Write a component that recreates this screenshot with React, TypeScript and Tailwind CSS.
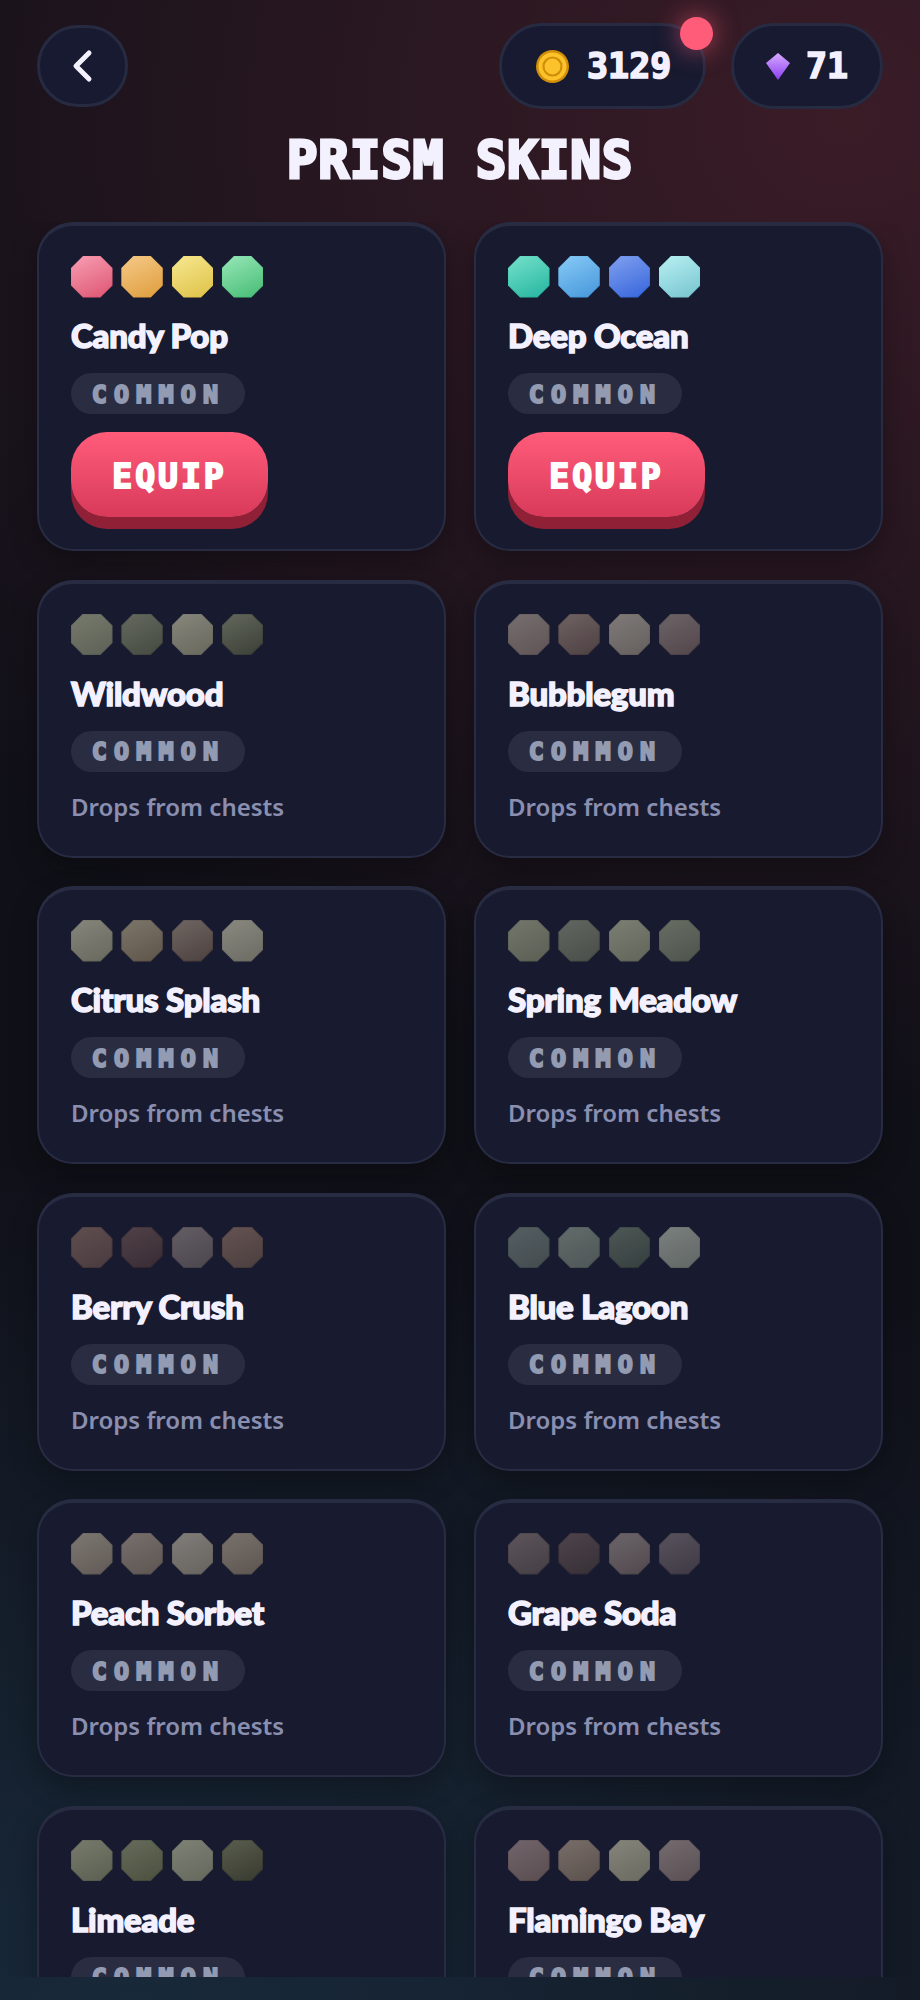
import { JSX } from 'react'

type Skin = {
  name: string
  swatches: string[]
  owned?: boolean
}

const skins: Skin[] = [
  {
    name: 'Candy Pop',
    owned: true,
    swatches: [
      'bg-[linear-gradient(155deg,#f79ab0,#dc4a68)]',
      'bg-[linear-gradient(155deg,#f5c783,#dd9730)]',
      'bg-[linear-gradient(155deg,#f6e78b,#dcbd3c)]',
      'bg-[linear-gradient(155deg,#92e6b5,#3bb86b)]'
    ]
  },
  {
    name: 'Deep Ocean',
    owned: true,
    swatches: [
      'bg-[linear-gradient(155deg,#6fe0c8,#18b09a)]',
      'bg-[linear-gradient(155deg,#82c8f7,#3a90d8)]',
      'bg-[linear-gradient(155deg,#7a9cf0,#2a5cd8)]',
      'bg-[linear-gradient(155deg,#b5f0f2,#6ec0cc)]'
    ]
  },
  {
    name: 'Wildwood',
    swatches: [
      'bg-[linear-gradient(155deg,#6f7365,#55584c)]',
      'bg-[linear-gradient(155deg,#5c6256,#3b4037)]',
      'bg-[linear-gradient(155deg,#808075,#5f5f54)]',
      'bg-[linear-gradient(155deg,#5b6054,#30352c)]'
    ]
  },
  {
    name: 'Bubblegum',
    swatches: [
      'bg-[linear-gradient(155deg,#6e6767,#574a4c)]',
      'bg-[linear-gradient(155deg,#685a5a,#443638)]',
      'bg-[linear-gradient(155deg,#797472,#5c5654)]',
      'bg-[linear-gradient(155deg,#655c60,#493c40)]'
    ]
  },
  {
    name: 'Citrus Splash',
    swatches: [
      'bg-[linear-gradient(155deg,#807f75,#5f5f54)]',
      'bg-[linear-gradient(155deg,#756e62,#564b40)]',
      'bg-[linear-gradient(155deg,#685e5a,#423634)]',
      'bg-[linear-gradient(155deg,#82827a,#64645a)]'
    ]
  },
  {
    name: 'Spring Meadow',
    swatches: [
      'bg-[linear-gradient(155deg,#6a6f64,#52564a)]',
      'bg-[linear-gradient(155deg,#595f58,#3f443e)]',
      'bg-[linear-gradient(155deg,#75796c,#585c50)]',
      'bg-[linear-gradient(155deg,#60665c,#444a42)]'
    ]
  },
  {
    name: 'Berry Crush',
    swatches: [
      'bg-[linear-gradient(155deg,#574446,#403134)]',
      'bg-[linear-gradient(155deg,#48383e,#2d202a)]',
      'bg-[linear-gradient(155deg,#5b545c,#423c44)]',
      'bg-[linear-gradient(155deg,#5d4a49,#413434)]'
    ]
  },
  {
    name: 'Blue Lagoon',
    swatches: [
      'bg-[linear-gradient(155deg,#4c5659,#394246)]',
      'bg-[linear-gradient(155deg,#5b6464,#444c4c)]',
      'bg-[linear-gradient(155deg,#444f4d,#2a3434)]',
      'bg-[linear-gradient(155deg,#747a78,#585e5c)]'
    ]
  },
  {
    name: 'Peach Sorbet',
    swatches: [
      'bg-[linear-gradient(155deg,#76706a,#58514d)]',
      'bg-[linear-gradient(155deg,#706864,#544c48)]',
      'bg-[linear-gradient(155deg,#7a7672,#5e5a56)]',
      'bg-[linear-gradient(155deg,#726a64,#544c46)]'
    ]
  },
  {
    name: 'Grape Soda',
    swatches: [
      'bg-[linear-gradient(155deg,#544c52,#3a343a)]',
      'bg-[linear-gradient(155deg,#453a42,#2c242c)]',
      'bg-[linear-gradient(155deg,#645c62,#473f43)]',
      'bg-[linear-gradient(155deg,#4f4a54,#342e3a)]'
    ]
  },
  {
    name: 'Limeade',
    swatches: [
      'bg-[linear-gradient(155deg,#707464,#525648)]',
      'bg-[linear-gradient(155deg,#5e6452,#414634)]',
      'bg-[linear-gradient(155deg,#787c6e,#5c6054)]',
      'bg-[linear-gradient(155deg,#515544,#2d2f24)]'
    ]
  },
  {
    name: 'Flamingo Bay',
    swatches: [
      'bg-[linear-gradient(155deg,#6a5c64,#514446)]',
      'bg-[linear-gradient(155deg,#706662,#534742)]',
      'bg-[linear-gradient(155deg,#7e7e74,#636258)]',
      'bg-[linear-gradient(155deg,#6d6468,#51464a)]'
    ]
  }
]

const octagon =
  '[clip-path:polygon(29%_0,71%_0,100%_29%,100%_71%,71%_100%,29%_100%,0_71%,0_29%)]'

function SkinCard({ skin }: { skin: Skin }): JSX.Element {
  return (
    <div className="flex flex-col items-start rounded-[36px] border-2 border-t-[4px] border-[#282c43] bg-[#181b30] px-8 pb-8 pt-[30px] shadow-[0_10px_28px_rgba(0,0,0,0.3)]">
      <div className="flex h-[42px] gap-[8.8px]">
        {skin.swatches.map((swatch) => (
          <div key={swatch} className={`size-[41.5px] p-px ${octagon} ${swatch}`}>
            <div className={`size-full bg-white/5 ${octagon}`} />
          </div>
        ))}
      </div>
      <h3 className="mt-[15px] mb-[15px] h-[45px] font-['Lato'] text-[33px] leading-[45px] font-black tracking-[-0.2px] whitespace-nowrap text-[#f4f1ff] [-webkit-text-stroke:1.5px_#f4f1ff]">
        {skin.name}
      </h3>
      <span className="flex h-[41px] w-[174px] items-center justify-center rounded-full bg-[#2a2d42] pl-[1px] pt-[2px] font-['DejaVu_Sans_Mono'] text-[25px] font-bold tracking-[7.2px] text-[#939bb2] [-webkit-text-stroke:2px_#939bb2]">
        COMMON
      </span>
      {skin.owned ? (
        <button
          type="button"
          className="mt-[18px] h-[85px] w-[197px] rounded-[36px] bg-[linear-gradient(180deg,#ff5c7a,#d93a5a)] pt-[4px] font-['DejaVu_Sans_Mono'] text-[33px] font-bold tracking-[3px] text-white shadow-[0_12px_0_#8f2036] [-webkit-text-stroke:2px_#ffffff]"
        >
          EQUIP
        </button>
      ) : (
        <p className="mt-[17px] h-[35px] font-['Noto_Sans'] text-[24px] leading-[35px] font-semibold text-[#8a8fb0]">
          Drops from chests
        </p>
      )}
    </div>
  )
}

export default function App(): JSX.Element {
  return (
    <div className="flex h-[2000px] w-[920px] flex-col overflow-hidden bg-[radial-gradient(ellipse_1150px_1000px_at_92%_6%,#3a1c27,transparent),radial-gradient(ellipse_1400px_850px_at_15%_100%,#18293a,transparent),linear-gradient(#101018,#101018)] pb-[23px]">
      <header className="flex items-center justify-between px-[37px] pt-[23px]">
        <button
          type="button"
          className="flex h-[82px] w-[91px] items-center justify-center rounded-full border-[3px] border-[#262b42] bg-[#171a30]"
        >
          <svg width="24" height="36" viewBox="0 0 24 36" fill="none">
            <path
              d="M18 5 5 18l13 13"
              stroke="#f4f1ff"
              strokeWidth="5"
              strokeLinecap="round"
              strokeLinejoin="round"
            />
          </svg>
        </button>
        <div className="flex gap-[25px]">
          <div className="relative flex h-[86px] w-[207px] items-center gap-[18px] rounded-full border-[3px] border-[#262b42] bg-[#171a30] pl-[34px]">
            <svg width="33" height="33" viewBox="0 0 33 33" className="shrink-0">
              <circle cx="16.5" cy="16.5" r="16.5" fill="#d08f08" />
              <circle cx="16.5" cy="16.5" r="14" fill="#fcc22c" />
              <circle cx="16.5" cy="16.5" r="9" fill="#fcc22c" stroke="#d08f08" strokeWidth="2.2" />
            </svg>
            <span className="pt-[1px] font-['DejaVu_Sans_Mono'] text-[35px] font-bold text-[#f4f1ff] [-webkit-text-stroke:1.6px_#f4f1ff]">
              3129
            </span>
            <span className="absolute -right-[10px] -top-[9.5px] size-[33px] rounded-full bg-[#ff5c7a] shadow-[0_0_26px_rgba(255,92,122,0.65)]" />
          </div>
          <div className="flex h-[86px] w-[152px] items-center gap-[16px] rounded-full border-[3px] border-[#262b42] bg-[#171a30] pl-[32px]">
            <svg width="24" height="27" viewBox="0 0 24 27" className="shrink-0">
              <defs>
                <linearGradient id="gem" x1="0" y1="0" x2="0" y2="1">
                  <stop offset="0" stopColor="#d8aaff" />
                  <stop offset="1" stopColor="#8a3ff0" />
                </linearGradient>
              </defs>
              <path d="M12 0 24 10 12 27 0 10Z" fill="url(#gem)" />
            </svg>
            <span className="pt-[1px] font-['DejaVu_Sans_Mono'] text-[35px] font-bold text-[#f4f1ff] [-webkit-text-stroke:1.6px_#f4f1ff]">
              71
            </span>
          </div>
        </div>
      </header>
      <h1 className="mt-[22px] mb-[31px] h-[60px] text-center font-['DejaVu_Sans_Mono'] text-[51px] leading-[60px] font-bold tracking-[0.8px] text-[#f4f1ff] [-webkit-text-stroke:3px_#f4f1ff]">
        PRISM SKINS
      </h1>
      <main className="min-h-0 flex-1 overflow-hidden px-[37px]">
        <div className="grid grid-cols-2 gap-x-[28px] gap-y-[28.5px]">
          {skins.map((skin) => (
            <SkinCard key={skin.name} skin={skin} />
          ))}
        </div>
      </main>
    </div>
  )
}
